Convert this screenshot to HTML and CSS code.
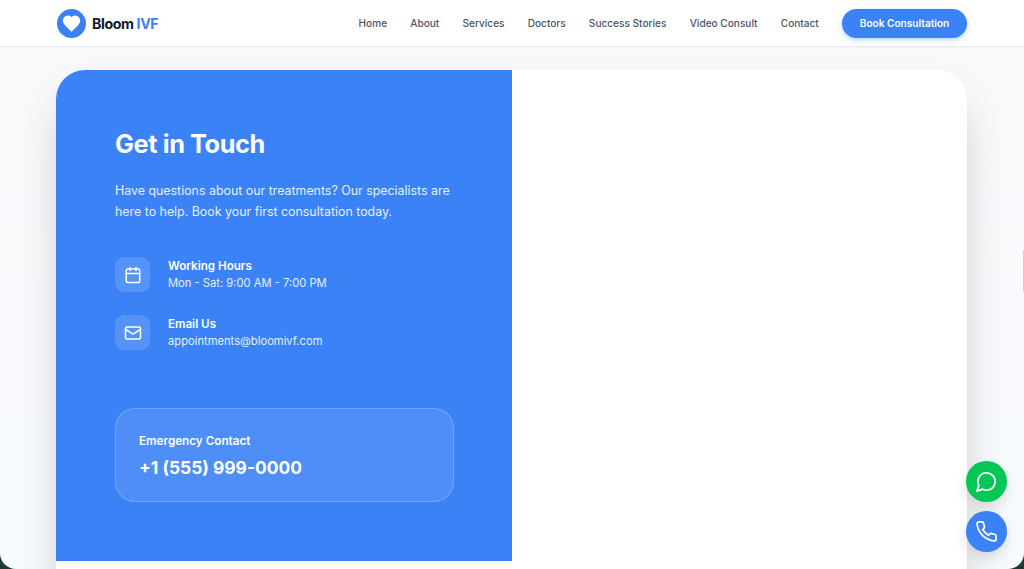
FILE: index.html
```html
<!DOCTYPE html>
<html lang="en">
<head>
<meta charset="utf-8">
<title>Bloom IVF</title>
<link rel="stylesheet" href="styles.css">
</head>
<body>
<div class="app">
  <header class="nav">
    <a class="brand">
      <span class="brand-mark"><svg viewBox="0 0 24 24" class="heart"><path d="M19 14c1.49-1.46 3-3.21 3-5.5A5.5 5.5 0 0 0 16.5 3c-1.76 0-3 .5-4.5 2-1.5-1.5-2.74-2-4.5-2A5.5 5.5 0 0 0 2 8.5c0 2.3 1.5 4.05 3 5.5l7 7Z"/></svg></span>
      <span class="brand-name">Bloom <em>IVF</em></span>
    </a>
    <nav class="links">
      <a>Home</a><a>About</a><a>Services</a><a>Doctors</a><a>Success Stories</a><a>Video Consult</a><a>Contact</a>
      <a class="cta">Book Consultation</a>
    </nav>
  </header>
  <main class="main">
    <section class="card">
      <div class="info">
        <h1>Get in Touch</h1>
        <p class="lead">Have questions about our treatments? Our specialists are here to help. Book your first consultation today.</p>
        <div class="rows">
          <div class="row">
            <span class="tile"><svg viewBox="0 0 24 24" class="ico"><path d="M8 2v4M16 2v4"/><rect x="3" y="4" width="18" height="18" rx="2"/><path d="M3 10h18"/></svg></span>
            <div><h2>Working Hours</h2><p>Mon - Sat: 9:00 AM - 7:00 PM</p></div>
          </div>
          <div class="row">
            <span class="tile"><svg viewBox="0 0 24 24" class="ico"><rect x="2" y="4" width="20" height="16" rx="2"/><path d="m22 7-8.97 5.7a1.94 1.94 0 0 1-2.06 0L2 7"/></svg></span>
            <div><h2>Email Us</h2><p>appointments@bloomivf.com</p></div>
          </div>
        </div>
        <div class="emergency">
          <h3>Emergency Contact</h3>
          <p>+1 (555) 999-0000</p>
        </div>
      </div>
      <div class="form-side"></div>
    </section>
  </main>
  <span class="edge-tab"></span>
  <a class="fab whatsapp"><svg viewBox="0 0 24 24" class="fab-ico"><path d="M7.9 20A9 9 0 1 0 4 16.1L2 22Z"/></svg></a>
  <a class="fab phone"><svg viewBox="0 0 24 24" class="fab-ico"><path d="M22 16.92v3a2 2 0 0 1-2.18 2 19.79 19.79 0 0 1-8.63-3.07 19.5 19.5 0 0 1-6-6 19.79 19.79 0 0 1-3.07-8.67A2 2 0 0 1 4.11 2h3a2 2 0 0 1 2 1.72 12.84 12.84 0 0 0 .7 2.81 2 2 0 0 1-.45 2.11L8.09 9.91a16 16 0 0 0 6 6l1.27-1.27a2 2 0 0 1 2.11-.45 12.84 12.84 0 0 0 2.81.7A2 2 0 0 1 22 16.92z"/></svg></a>
</div>
</body>
</html>
```
FILE: styles.css
```css
* { box-sizing: border-box; margin: 0; padding: 0; }
html, body { height: 100%; overflow: hidden; }
body { background: #1d3b33; font-family: Inter, "Liberation Sans", sans-serif; }
.app { position: relative; height: 569px; overflow: hidden; border-radius: 0 0 16px 16px; background: linear-gradient(180deg, #f8f9fb 0%, #f8fbfe 100%); }
.nav { height: 47px; background: #fff; border-bottom: 1px solid #e9ebee; box-shadow: 0 1px 3px rgba(0,0,0,.04); display: flex; align-items: center; justify-content: space-between; padding: 0 57px; position: relative; z-index: 2; }
.brand { display: flex; align-items: center; gap: 6px; }
.brand-mark { width: 29px; height: 29px; border-radius: 50%; background: #3b82f6; display: flex; align-items: center; justify-content: center; }
.heart { width: 19px; height: 19px; fill: #fff; stroke: #fff; stroke-width: 2; stroke-linejoin: round; }
.brand-name { font-size: 14.2px; font-weight: 700; color: #111827; letter-spacing: -.4px; }
.brand-name em { font-style: normal; color: #3b82f6; }
.links { display: flex; align-items: center; gap: 23.2px; font-size: 10.1px; font-weight: 500; color: #4b5563; }
.cta { width: 125px; height: 29px; border-radius: 15px; background: #3b82f6; color: #fff; font-weight: 600; display: flex; align-items: center; justify-content: center; box-shadow: 0 2px 5px rgba(59,130,246,.35); }
.main { padding: 23px 57px 0 56px; }
.card { display: grid; grid-template-columns: 1fr 1fr; align-items: start; min-height: 560px; border-radius: 29px; overflow: hidden; background: #fff; box-shadow: 0 25px 50px -12px rgba(0,0,0,.25); }
.info { background: #3b82f6; color: #fff; padding: 58px 58px 58px 59px; height: 491px; }
h1 { font-size: 25.3px; line-height: 31px; font-weight: 700; letter-spacing: -.4px; }
.lead { margin-top: 21px; font-size: 12.4px; line-height: 21px; color: #e6effe; }
.rows { margin-top: 35px; display: flex; flex-direction: column; gap: 23px; }
.row { display: flex; align-items: center; gap: 18px; height: 35px; }
.tile { width: 35px; height: 35px; flex: none; border-radius: 9px; background: rgba(255,255,255,.14); display: flex; align-items: center; justify-content: center; }
.ico { width: 18px; height: 18px; fill: none; stroke: #fff; stroke-width: 2; stroke-linecap: round; stroke-linejoin: round; }
.row h2 { font-size: 11.6px; line-height: 18px; font-weight: 600; }
.row p { font-size: 11.2px; line-height: 17px; color: #e6effe; }
.emergency { margin-top: 58px; height: 94px; padding: 23px; border: 1px solid rgba(255,255,255,.2); border-radius: 20px; background: rgba(255,255,255,.1); }
.emergency h3 { font-size: 11.7px; line-height: 18px; font-weight: 600; }
.emergency p { margin-top: 5px; font-size: 17.4px; line-height: 26px; font-weight: 700; }
.fab { position: absolute; left: 966px; width: 40.5px; height: 40.5px; border-radius: 50%; display: flex; align-items: center; justify-content: center; box-shadow: 0 6px 14px rgba(0,0,0,.12); }
.whatsapp { top: 461px; background: #05c755; }
.phone { top: 511px; background: #3b82f6; }
.fab-ico { width: 23px; height: 23px; fill: none; stroke: #fff; stroke-width: 1.8; stroke-linecap: round; stroke-linejoin: round; }
.edge-tab { position: absolute; right: 0; top: 250px; width: 1px; height: 42px; background: #cfd2d6; }
```
